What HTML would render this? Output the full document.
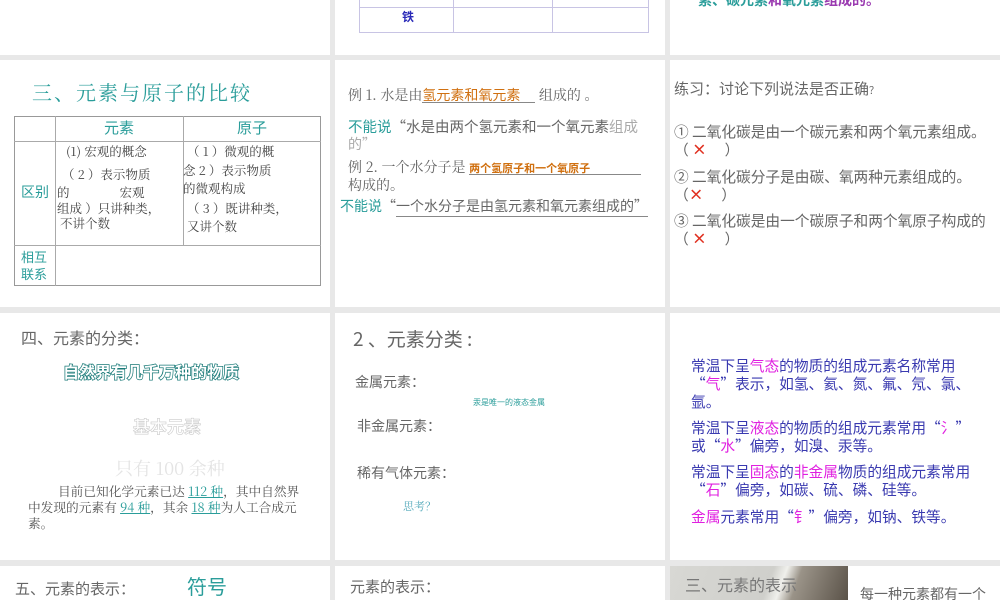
<!DOCTYPE html>
<html><head><meta charset="utf-8"><style>
*{margin:0;padding:0;box-sizing:border-box}
body{width:1000px;height:600px;background:#e8e8e8;position:relative;overflow:hidden;font-family:"Noto Sans CJK SC","Liberation Sans",sans-serif}
.p{position:absolute;background:#fff;overflow:hidden}
.t{position:absolute;white-space:nowrap;line-height:1}
.s{font-family:"Noto Serif CJK SC","Liberation Serif",serif}
.g{color:#666}.tl{color:#2a9d9a}.or{color:#d07010}.bl{color:#3a3ab0}.mg{color:#e020e0}.rd{color:#e03020;font-weight:bold}
</style></head><body>
<!-- row 1 -->
<div class="p" style="left:0;top:0;width:330px;height:55px"></div>
<div class="p" style="left:335px;top:0;width:330px;height:55px">
 <div style="position:absolute;left:24px;top:-30px;width:290px;height:63px;border:1px solid #c8c4e4"></div>
 <div style="position:absolute;left:24px;top:7px;width:290px;border-top:1px solid #c8c4e4"></div>
 <div style="position:absolute;left:118px;top:-30px;height:63px;border-left:1px solid #c8c4e4"></div>
 <div style="position:absolute;left:217px;top:-30px;height:63px;border-left:1px solid #c8c4e4"></div>
 <div class="t" style="left:67px;top:11px;font-size:12px;color:#2a2ab8;font-weight:bold">铁</div>
</div>
<div class="p" style="left:670px;top:0;width:330px;height:55px">
 <div class="t" style="left:28px;top:-7px;font-size:14px;font-weight:bold"><span class="tl">素、碳元素</span><span style="color:#9a3ab0">和</span><span class="tl">氧元素</span><span style="color:#9a3ab0">组成的。</span></div>
</div>
<!-- row 2 -->
<div class="p" style="left:0;top:60px;width:330px;height:247px">
 <div class="t s tl" style="left:32px;top:22px;font-size:20px;letter-spacing:2px">三、元素与原子的比较</div>
 <div style="position:absolute;left:14px;top:56px;width:307px;height:170px;border:1px solid #999"></div>
 <div style="position:absolute;left:14px;top:81px;width:307px;border-top:1px solid #aaa"></div>
 <div style="position:absolute;left:14px;top:185px;width:307px;border-top:1px solid #aaa"></div>
 <div style="position:absolute;left:55px;top:56px;height:170px;border-left:1px solid #aaa"></div>
 <div style="position:absolute;left:183px;top:56px;height:129px;border-left:1px solid #aaa"></div>
 <div class="t tl" style="left:104px;top:60px;font-size:15px">元素</div>
 <div class="t tl" style="left:237px;top:60px;font-size:15px">原子</div>
 <div class="t tl" style="left:21px;top:125px;font-size:14px">区别</div>
 <div class="t tl" style="left:21px;top:188px;font-size:13px;line-height:17px;white-space:normal;width:30px">相互联系</div>
 <div class="t s" style="left:66px;top:85px;font-size:12.5px;color:#444">(1) 宏观的概念</div>
 <div class="t s" style="left:62px;top:108px;font-size:12.5px;color:#444">（ 2 ）表示物质</div>
 <div class="t s" style="left:57px;top:126px;font-size:12.5px;color:#444">的　　　　宏观</div>
 <div class="t s" style="left:57px;top:142px;font-size:12.5px;color:#444">组成 ）只讲种类，</div>
 <div class="t s" style="left:60px;top:157px;font-size:12.5px;color:#444">不讲个数</div>
 <div class="t s" style="left:187px;top:85px;font-size:12.5px;color:#444">（ 1 ）微观的概</div>
 <div class="t s" style="left:183px;top:104px;font-size:12.5px;color:#444">念 2 ）表示物质</div>
 <div class="t s" style="left:183px;top:122px;font-size:12.5px;color:#444">的微观构成</div>
 <div class="t s" style="left:187px;top:142px;font-size:12.5px;color:#444">（ 3 ）既讲种类，</div>
 <div class="t s" style="left:187px;top:160px;font-size:12.5px;color:#444">又讲个数</div>
</div>
<div class="p" style="left:335px;top:60px;width:330px;height:247px">
 <div class="t s g" style="left:13px;top:28px;font-size:14px">例 1. 水是由<span class="or" style="display:inline-block;border-bottom:1px solid #888;width:113px;font-family:'Noto Sans CJK SC',sans-serif">氢元素和氧元素</span> 组成的 。</div>
 <div class="t g" style="left:13px;top:60px;font-size:14.5px"><span class="tl">不能说</span>“水是由两个氢元素和一个氧元素<span style="color:#aaa">组成</span></div>
 <div class="t g" style="left:13px;top:77px;font-size:14px;color:#aaa">的”</div>
 <div class="t s g" style="left:13px;top:100px;font-size:14px">例 2. 一个水分子是 <span class="or" style="display:inline-block;border-bottom:1px solid #888;width:172px;font-size:11px;font-weight:bold;font-family:'Noto Sans CJK SC',sans-serif">两个氢原子和一个氧原子</span></div>
 <div class="t s g" style="left:13px;top:118px;font-size:14px">构成的。</div>
 <div class="t g" style="left:5px;top:139px;font-size:14px"><span class="tl">不能说</span>“<span style="border-bottom:1px solid #888">一个水分子是由氢元素和氧元素组成的”</span></div>
</div>
<div class="p" style="left:670px;top:60px;width:330px;height:247px">
 <div class="t g" style="left:4px;top:21px;font-size:15px">练习：讨论下列说法是否正确<span style="font-size:10px">？</span></div>
 <div class="t g" style="left:4px;top:65px;font-size:14.7px">① 二氧化碳是由一个碳元素和两个氧元素组成。</div>
 <div class="t g" style="left:4px;top:83px;font-size:14.7px">（ <span class="rd">×</span>　 ）</div>
 <div class="t g" style="left:4px;top:110px;font-size:14.7px">② 二氧化碳分子是由碳、氧两种元素组成的。</div>
 <div class="t g" style="left:4px;top:128px;font-size:14.7px">（<span class="rd">×</span>　 ）</div>
 <div class="t g" style="left:4px;top:154px;font-size:14.7px">③ 二氧化碳是由一个碳原子和两个氧原子构成的</div>
 <div class="t g" style="left:4px;top:172px;font-size:14.7px">（ <span class="rd">×</span>　 ）</div>
</div>
<!-- row 3 -->
<div class="p" style="left:0;top:313px;width:330px;height:247px">
 <div class="t g" style="left:21px;top:16px;font-size:16px">四、元素的分类：</div>
 <div class="t" style="left:63px;top:50px;font-size:16px;font-weight:bold;color:#fff;-webkit-text-stroke:1.5px #1a7a78;paint-order:stroke fill">自然界有几千万种的物质</div>
 <div class="t" style="left:133px;top:104px;font-size:17px;font-weight:bold;color:#fff;-webkit-text-stroke:0.6px #ccc">基本元素</div>
 <div class="t s" style="left:115px;top:146px;font-size:18px;color:#e4e4e4">只有 100 余种</div>
 <div class="t s" style="left:58px;top:172px;font-size:12.7px;color:#555">目前已知化学元素已达 <u class="tl">112 种</u>，其中自然界</div>
 <div class="t s" style="left:28px;top:188px;font-size:12.7px;color:#555">中发现的元素有 <u class="tl">94 种</u>，其余 <u class="tl">18 种</u>为人工合成元</div>
 <div class="t s" style="left:28px;top:204px;font-size:12.7px;color:#555">素。</div>
</div>
<div class="p" style="left:335px;top:313px;width:330px;height:247px">
 <div class="t g" style="left:18px;top:16px;font-size:19px">2 、元素分类 :</div>
 <div class="t g" style="left:20px;top:62px;font-size:14px">金属元素：</div>
 <div class="t tl" style="left:138px;top:86px;font-size:8px">汞是唯一的液态金属</div>
 <div class="t g" style="left:22px;top:106px;font-size:14px">非金属元素：</div>
 <div class="t g" style="left:22px;top:153px;font-size:14px">稀有气体元素：</div>
 <div class="t s" style="left:68px;top:188px;font-size:11px;color:#5ab">思考？</div>
</div>
<div class="p" style="left:670px;top:313px;width:330px;height:247px;font-size:14.7px">
 <div class="t bl" style="left:21px;top:46px">常温下呈<span class="mg">气态</span>的物质的组成元素名称常用</div>
 <div class="t bl" style="left:21px;top:64px">“<span class="mg">气</span>”表示，如氢、氦、氮、氟、氖、氯、</div>
 <div class="t bl" style="left:21px;top:82px">氩。</div>
 <div class="t bl" style="left:21px;top:108px">常温下呈<span class="mg">液态</span>的物质的组成元素常用“<span class="mg">氵</span>”</div>
 <div class="t bl" style="left:21px;top:126px">或“<span class="mg">水</span>”偏旁，如溴、汞等。</div>
 <div class="t bl" style="left:21px;top:152px">常温下呈<span class="mg">固态</span>的<span class="mg">非金属</span>物质的组成元素常用</div>
 <div class="t bl" style="left:21px;top:170px">“<span class="mg">石</span>”偏旁，如碳、硫、磷、硅等。</div>
 <div class="t bl" style="left:21px;top:197px"><span class="mg">金属</span>元素常用“<span class="mg">钅</span>”偏旁，如钠、铁等。</div>
</div>
<!-- row 4 -->
<div class="p" style="left:0;top:566px;width:330px;height:34px">
 <div class="t g" style="left:15px;top:15px;font-size:15px">五、元素的表示：</div>
 <div class="t tl" style="left:187px;top:10px;font-size:20px">符号</div>
</div>
<div class="p" style="left:335px;top:566px;width:330px;height:34px">
 <div class="t g" style="left:15px;top:13px;font-size:15px">元素的表示：</div>
</div>
<div class="p" style="left:670px;top:566px;width:330px;height:34px">
 <div style="position:absolute;left:0;top:0;width:178px;height:34px;background:linear-gradient(110deg,#d8d8d4 0%,#cfcfcb 55%,#f0f0ec 62%,#9a9388 70%,#5a5248 100%)"></div>
 <div class="t" style="left:15px;top:10px;font-size:16px;color:#777">三、元素的表示</div>
 <div class="t" style="left:190px;top:21px;font-size:14px;color:#666">每一种元素都有一个</div>
</div>
</body></html>
